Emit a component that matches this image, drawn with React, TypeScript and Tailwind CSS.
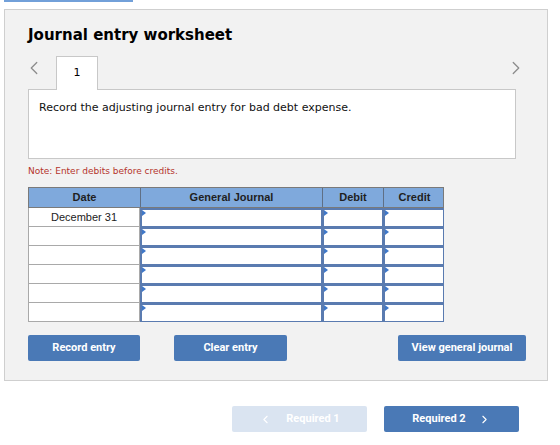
import { ChevronLeft, ChevronRight } from 'lucide-react';

const rows = ['December 31', '', '', '', '', ''];

function Pick() {
  return (
    <div className="relative h-full bg-white border border-[#5a7bb0] border-t-2 border-l-2">
      <span className="absolute left-0 top-0 w-0 h-0 border-t-[3px] border-b-[3px] border-l-[4px] border-t-transparent border-b-transparent border-l-[#3f78c9]" />
    </div>
  );
}

function App() {
  return (
    <div className="w-[560px] h-[445px] bg-white overflow-hidden font-['DejaVu_Sans',sans-serif]">
      <div className="ml-[4px] w-[129px] h-[2px] bg-[#72a0d9]" />

      <div className="mt-[7px] ml-[4px] w-[544px] h-[372px] border border-[#cfcfcf] bg-[#f2f2f2] pl-[23px] pt-[15px]">
        <h1 className="text-[15px] leading-[20px] font-bold text-black">Journal entry worksheet</h1>

        <div className="mt-[11px] flex items-end w-[488px]">
          <ChevronLeft className="w-[22px] h-[22px] text-[#8c8c8c] mb-[10px] -ml-[5px]" strokeWidth={1.4} />
          <div className="relative z-10 -mb-px ml-[11px] w-[42px] h-[34px] bg-white border border-b-0 border-[#c8c8c8] flex items-center justify-center text-[11px] text-black">
            1
          </div>
          <div className="flex-1" />
          <ChevronRight className="w-[22px] h-[22px] text-[#8c8c8c] mb-[10px] -mr-[11px]" strokeWidth={1.4} />
        </div>

        <div className="w-[488px] h-[70px] bg-white border border-[#c8c8c8] pl-[10px] pt-[11px] text-[11px] leading-[14px] text-[#111]">
          Record the adjusting journal entry for bad debt expense.
        </div>

        <p className="mt-[6px] text-[9px] leading-[12px] text-[#b5342c]">Note: Enter debits before credits.</p>

        <div className="mt-[10px] w-[416px] font-['Liberation_Sans',Arial,sans-serif] text-[11px]">
          <div className="grid grid-cols-[112px_182px_61px_61px] h-[21px] bg-[#7fa9dc] border border-[#7a7a7a] font-bold text-[#1f1f1f]">
            <div className="flex items-center justify-center border-r border-[#5f6f85]">Date</div>
            <div className="flex items-center justify-center border-r border-[#5f6f85]">General Journal</div>
            <div className="flex items-center justify-center border-r border-[#5f6f85]">Debit</div>
            <div className="flex items-center justify-center">Credit</div>
          </div>
          {rows.map((d, i) => (
            <div key={i} className="grid grid-cols-[112px_182px_61px_61px] h-[19px]">
              <div className="bg-white border border-t-0 border-[#a9a9a9] flex items-center justify-center text-[#222]">{d}</div>
              <Pick />
              <Pick />
              <Pick />
            </div>
          ))}
        </div>

        <div className="mt-[13px] flex font-['Roboto',sans-serif] text-[11px] font-bold text-white">
          <button className="w-[112px] h-[26px] rounded-[2px] bg-[#4a79b6]">Record entry</button>
          <button className="ml-[34px] w-[113px] h-[26px] rounded-[2px] bg-[#4a79b6]">Clear entry</button>
          <button className="ml-[111px] w-[128px] h-[26px] rounded-[2px] bg-[#4a79b6]">View general journal</button>
        </div>
      </div>

      <div className="mt-[25px] flex font-['Roboto',sans-serif] text-[11px] font-bold">
        <button className="ml-[232px] w-[135px] h-[26px] rounded-[2px] bg-[#dae4f1] text-white flex items-center justify-center gap-[14px]">
          <ChevronLeft className="w-[13px] h-[13px]" strokeWidth={2} />
          Required 1
        </button>
        <button className="ml-[17px] w-[135px] h-[26px] rounded-[2px] bg-[#4a79b6] text-white flex items-center justify-center gap-[12px]">
          Required 2
          <ChevronRight className="w-[13px] h-[13px]" strokeWidth={2} />
        </button>
      </div>
    </div>
  );
}

export default App;
